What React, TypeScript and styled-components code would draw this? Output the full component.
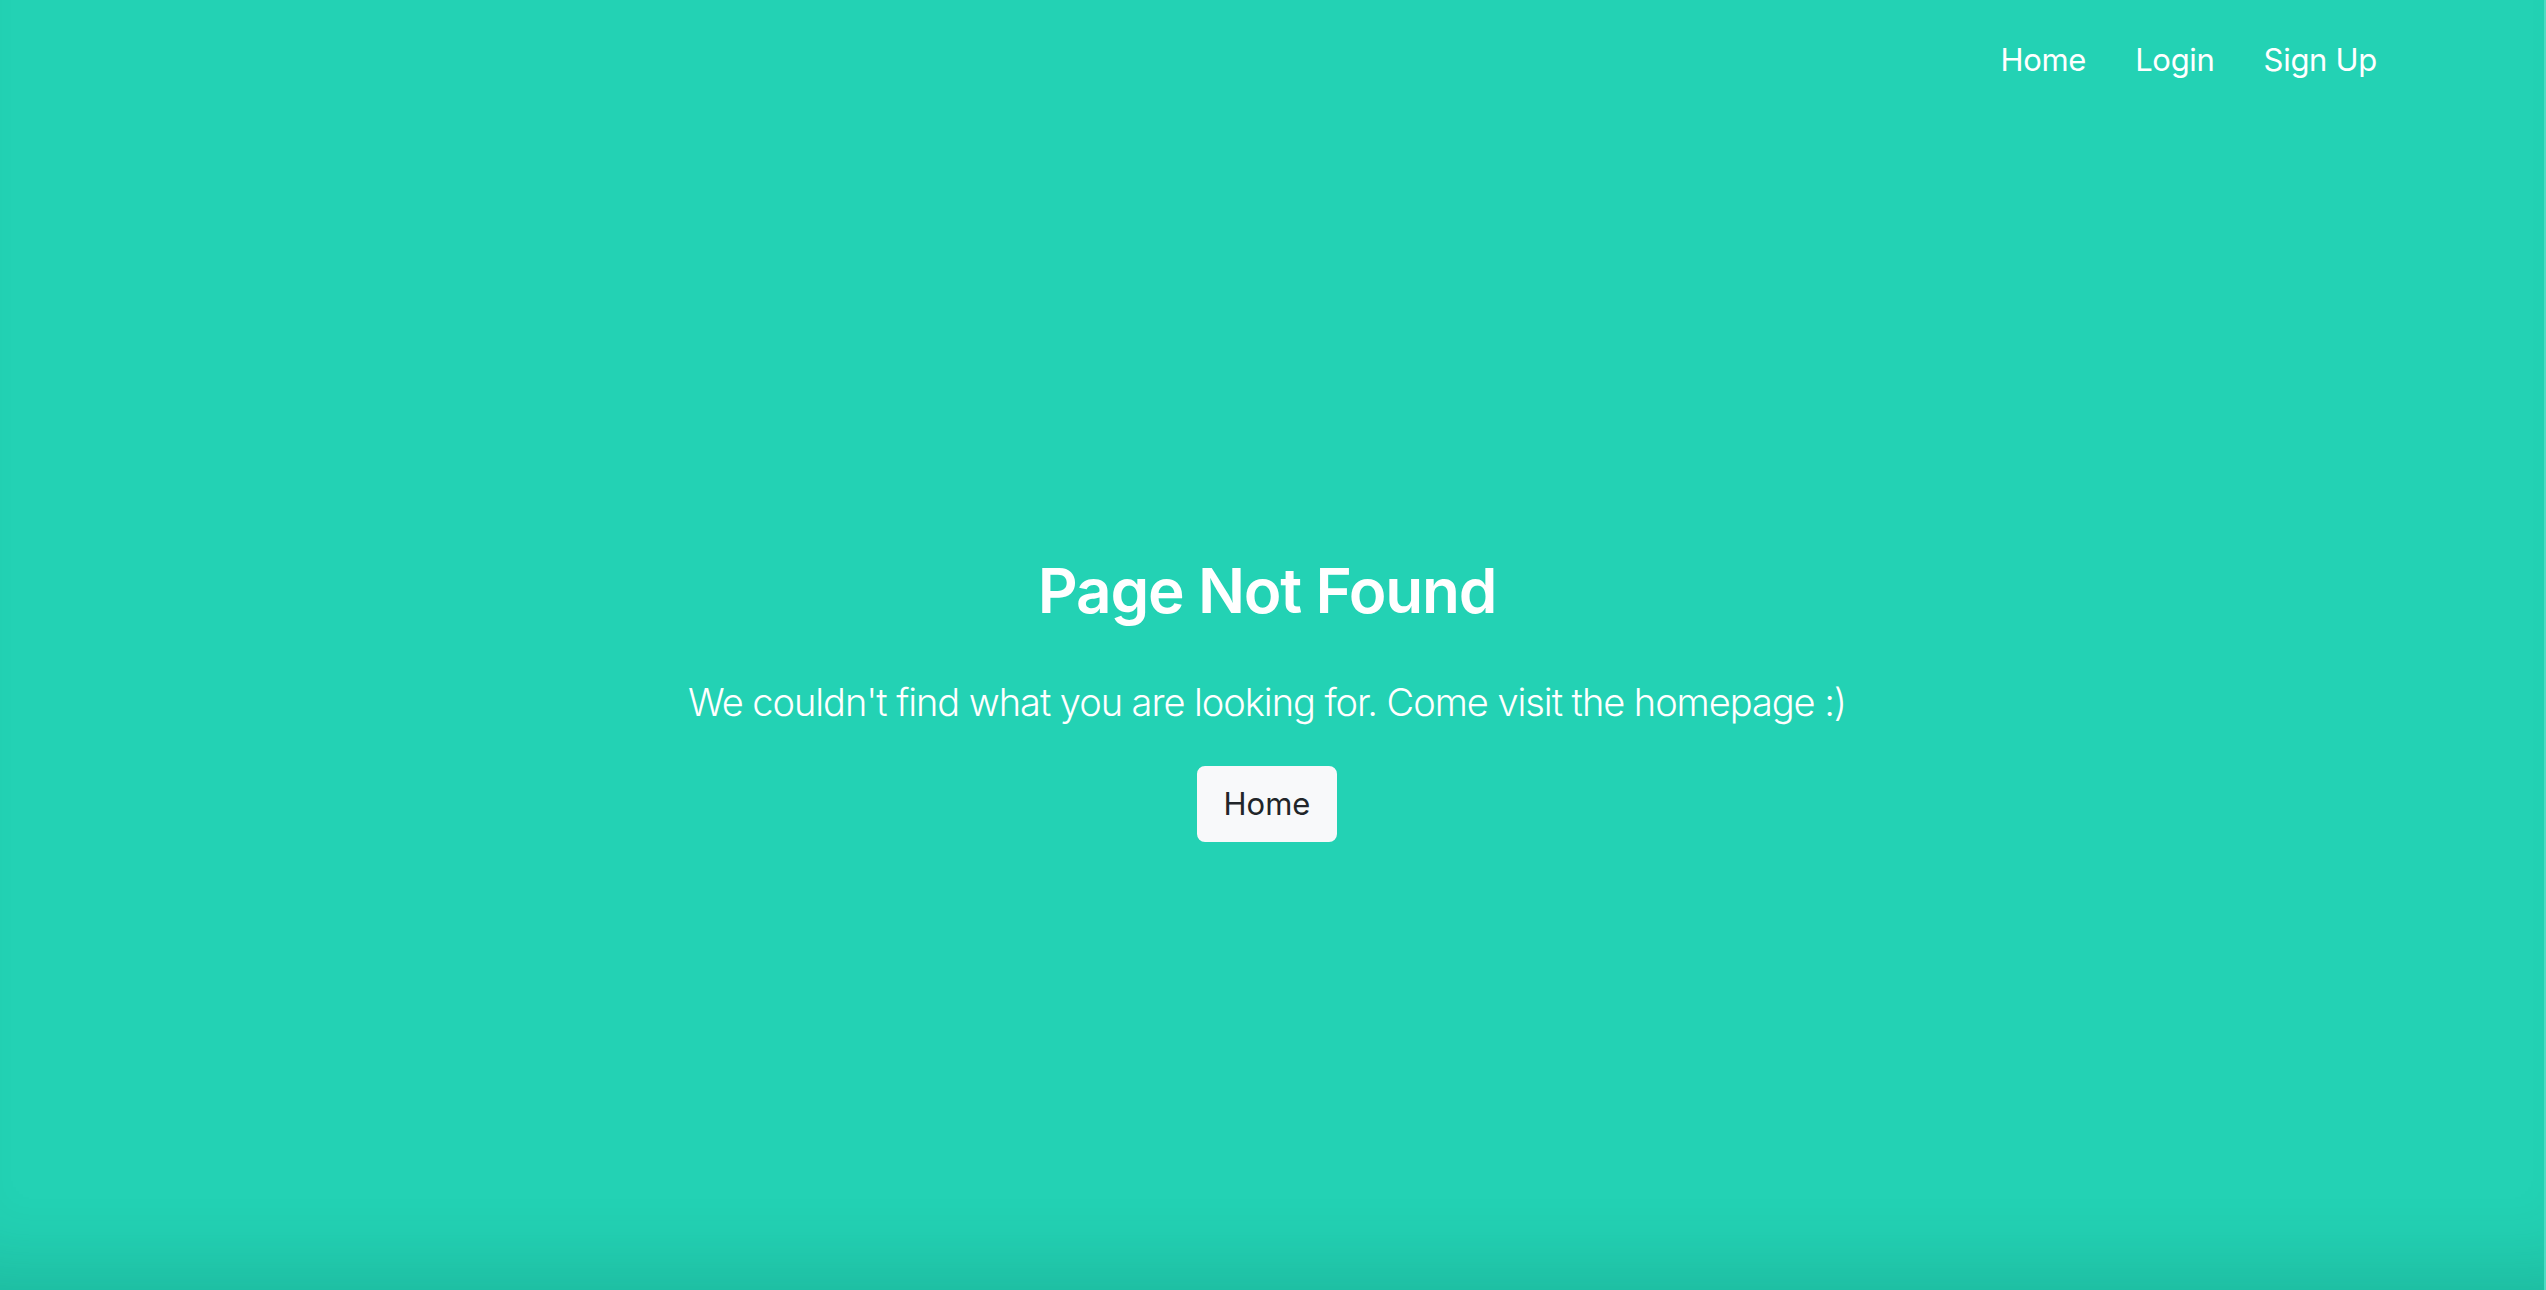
import React from "react";
import styled, { createGlobalStyle } from "styled-components";

const GlobalStyle = createGlobalStyle`
  html, body {
    margin: 0;
    padding: 0;
    background: #23d2b4;
  }
  body {
    font-family: "Inter", "Helvetica Neue", Arial, sans-serif;
    -webkit-font-smoothing: antialiased;
    overflow: hidden;
  }
  * { box-sizing: border-box; }
`;

const Page = styled.div`
  height: 100vh;
  display: flex;
  flex-direction: column;
  background: #23d2b4;
  border-right: 2px solid #4cdcc3;
  box-shadow: inset 0 -80px 70px -55px rgba(0, 60, 50, 0.16);
`;

const NavBar = styled.nav`
  display: flex;
  justify-content: flex-end;
  align-items: center;
  gap: 49px;
  padding: 36px 167px 0 0;
`;

const NavLink = styled.a`
  font-size: 31px;
  line-height: 48px;
  font-weight: 400;
  color: #ffffff;
  text-decoration: none;
  letter-spacing: -0.3px;
  cursor: pointer;
`;

const Main = styled.main`
  flex: 1;
  display: flex;
  flex-direction: column;
  align-items: center;
  padding: 470px 10px 0 0;
  text-align: center;
`;

const Title = styled.h1`
  margin: 0;
  font-size: 62px;
  line-height: 74px;
  font-weight: 600;
  color: #ffffff;
  letter-spacing: -1.2px;
`;

const Lead = styled.p`
  margin: 44px 0 0;
  font-size: 38px;
  line-height: 60px;
  font-weight: 300;
  color: #ffffff;
  letter-spacing: -1.05px;
`;

const Button = styled.button`
  margin-top: 34px;
  height: 76px;
  width: 140px;
  padding: 0;
  border: 2px solid #f8f9fa;
  border-radius: 8px;
  background: #f8f9fa;
  color: #212529;
  font-family: inherit;
  font-size: 31px;
  font-weight: 400;
  line-height: 48px;
  cursor: pointer;
`;

export default function App() {
  return (
    <>
      <GlobalStyle />
      <Page>
        <NavBar>
          <NavLink href="#">Home</NavLink>
          <NavLink href="#">Login</NavLink>
          <NavLink href="#">Sign Up</NavLink>
        </NavBar>
        <Main>
          <Title>Page Not Found</Title>
          <Lead>We couldn't find what you are looking for. Come visit the homepage :)</Lead>
          <Button>Home</Button>
        </Main>
      </Page>
    </>
  );
}
